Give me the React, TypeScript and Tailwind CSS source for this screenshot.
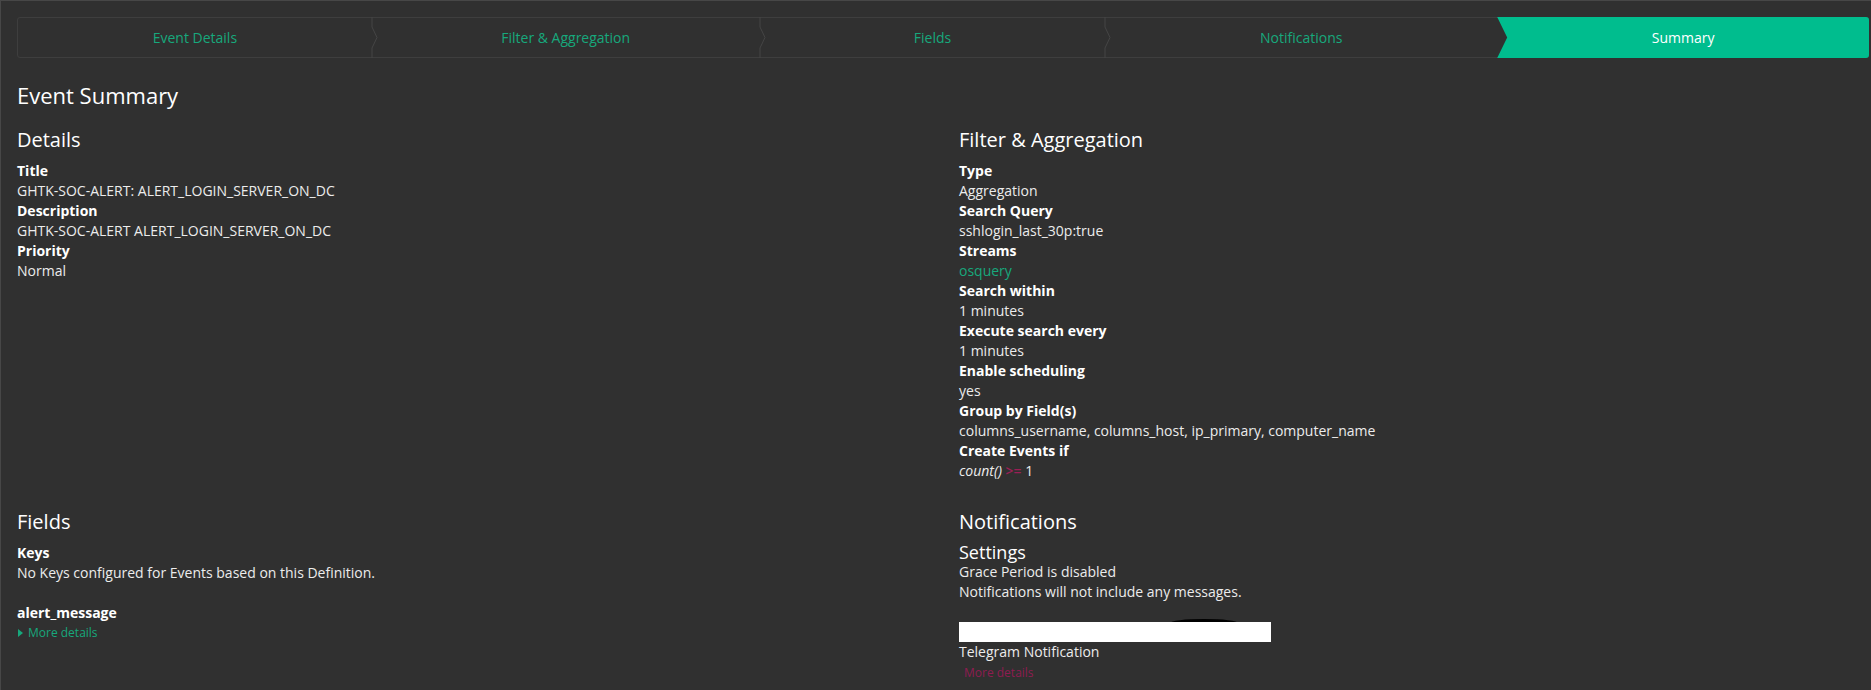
import type { FC, ReactNode } from "react";

const steps = [
	{ label: "Event Details", w: "354fr" },
	{ label: "Filter & Aggregation", w: "388fr" },
	{ label: "Fields", w: "346fr" },
	{ label: "Notifications", w: "392fr" },
	{ label: "Summary", w: "371fr" },
];

const Chevron: FC = () => (
	<svg
		className="absolute right-[-6px] top-[-1px] z-10"
		width="12"
		height="41"
		viewBox="0 0 12 41"
		fill="none"
	>
		<path
			d="M6 0 V10 L11 20.5 L6 31 V41"
			stroke="#454545"
			strokeWidth="1"
		/>
	</svg>
);

const Row: FC<{ label: string; children: ReactNode }> = ({ label, children }) => (
	<>
		<dt className="font-bold text-white">{label}</dt>
		<dd className="text-[#ececec]">{children}</dd>
	</>
);

const App: FC = () => (
	<div className="w-[1871px] h-[690px] overflow-hidden bg-[#303030] border-l border-t border-[#474747] font-['Open_Sans',sans-serif] text-[14px] leading-[20px] text-[#ececec]">
		<div className="pl-[16px] pt-[16px] w-[1868px]">
			{/* Wizard steps */}
			<div className="grid grid-cols-[354fr_388fr_346fr_392fr_371fr] h-[41px] border border-[#3e3e3e] rounded-[3px]">
				{steps.map((s, i) =>
					i === steps.length - 1 ? (
						<div
							key={s.label}
							className="-my-px -mr-px flex items-center justify-center bg-[#00bd8e] text-white rounded-r-[3px] [clip-path:polygon(0_0,100%_0,100%_100%,0_100%,10px_50%)]"
						>
							{s.label}
						</div>
					) : (
						<div
							key={s.label}
							className="relative flex items-center justify-center text-[#17a87c]"
						>
							{s.label}
							{i < 3 && <Chevron />}
						</div>
					)
				)}
			</div>

			<h1 className="mt-[25px] text-[22px] leading-[24px] text-white">Event Summary</h1>

			<div className="mt-[22px] grid grid-cols-[925px_1fr] gap-x-[17px] gap-y-[30px]">
				{/* Details */}
				<section>
					<h2 className="text-[20px] leading-[22px] text-white mb-[10px]">Details</h2>
					<dl>
						<Row label="Title">GHTK-SOC-ALERT: ALERT_LOGIN_SERVER_ON_DC</Row>
						<Row label="Description">GHTK-SOC-ALERT ALERT_LOGIN_SERVER_ON_DC</Row>
						<Row label="Priority">Normal</Row>
					</dl>
				</section>

				{/* Filter & Aggregation */}
				<section>
					<h2 className="text-[20px] leading-[22px] text-white mb-[10px]">Filter &amp; Aggregation</h2>
					<dl>
						<Row label="Type">Aggregation</Row>
						<Row label="Search Query">sshlogin_last_30p:true</Row>
						<Row label="Streams">
							<span className="text-[#17a87c]">osquery</span>
						</Row>
						<Row label="Search within">1 minutes</Row>
						<Row label="Execute search every">1 minutes</Row>
						<Row label="Enable scheduling">yes</Row>
						<Row label="Group by Field(s)">columns_username, columns_host, ip_primary, computer_name</Row>
						<Row label="Create Events if">
							<em>count()</em> <span className="text-[#9a1f55] font-semibold">&gt;=</span> 1
						</Row>
					</dl>
				</section>

				{/* Fields */}
				<section>
					<h2 className="text-[20px] leading-[22px] text-white mb-[10px]">Fields</h2>
					<dl>
						<Row label="Keys">No Keys configured for Events based on this Definition.</Row>
					</dl>
					<div className="mt-[20px]">
						<div className="font-bold text-white">alert_message</div>
						<div className="flex items-center gap-[5px] text-[12px] text-[#17a87c]">
							<span className="ml-[1px] w-0 h-0 border-y-[4px] border-y-transparent border-l-[5px] border-l-[#17a87c]" />
							More details
						</div>
					</div>
				</section>

				{/* Notifications */}
				<section>
					<h2 className="text-[20px] leading-[22px] text-white mb-[9px]">Notifications</h2>
					<h3 className="text-[18px] leading-[20px] text-white">Settings</h3>
					<p>Grace Period is disabled</p>
					<p>Notifications will not include any messages.</p>
					<div className="relative mt-[20px] w-[312px]">
						<div className="absolute left-[211px] -top-[3px] w-[68px] h-[8px] rounded-[50%] bg-black" />
						<div className="relative h-[20px] bg-white" />
					</div>
					<div>Telegram Notification</div>
					<div className="mt-[1px] pl-[5px] text-[12px] text-[#8e1c50]">More details</div>
				</section>
			</div>
		</div>
	</div>
);

export default App;
